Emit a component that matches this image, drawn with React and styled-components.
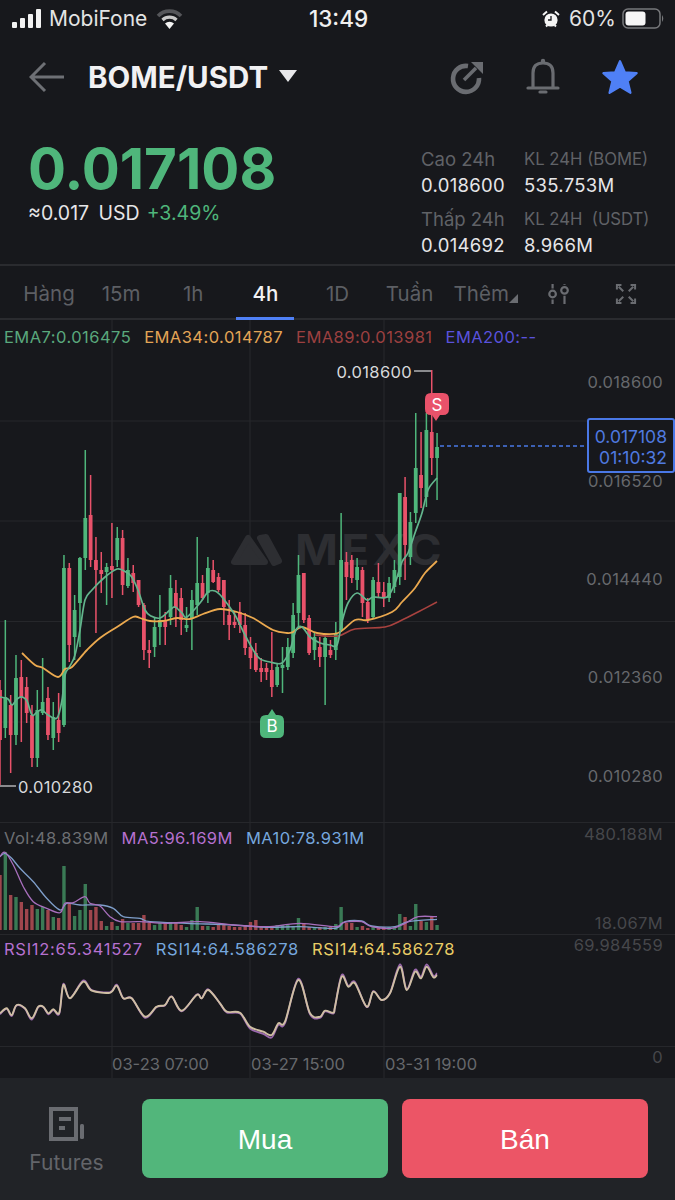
import React from "react";
import styled, { createGlobalStyle } from "styled-components";

const GREEN = "#4fb67b";
const RED = "#e9526a";

// [high, bodyTop, bodyBottom, low, colour] in screen y, one candle every 5.33px
const CANDLES = [
    [680, 690, 740, 785, "r"], [620, 697, 728, 738, "g"], [695, 705, 735, 773, "r"], [655, 678, 735, 745, "g"],
    [660, 677, 698, 742, "r"], [677, 687, 713, 723, "r"], [705, 715, 758, 767, "r"], [690, 710, 758, 767, "g"],
    [658, 702, 713, 715, "g"], [687, 698, 735, 740, "r"], [702, 717, 738, 750, "g"], [693, 720, 733, 742, "r"],
    [555, 568, 725, 727, "g"], [563, 568, 645, 662, "r"], [595, 610, 637, 660, "g"], [557, 558, 603, 647, "g"],
    [450, 518, 558, 570, "g"], [475, 515, 560, 567, "r"], [537, 560, 570, 633, "r"], [552, 570, 574, 593, "r"],
    [563, 567, 572, 605, "g"], [523, 566, 570, 598, "r"], [527, 538, 560, 567, "g"], [530, 538, 585, 595, "r"],
    [558, 570, 586, 588, "g"], [565, 573, 583, 592, "r"], [580, 580, 605, 607, "r"], [603, 605, 650, 660, "r"],
    [640, 650, 653, 668, "r"], [618, 627, 647, 657, "g"], [595, 620, 627, 645, "g"], [612, 620, 627, 645, "r"],
    [575, 588, 617, 625, "g"], [580, 593, 608, 627, "r"], [588, 598, 620, 635, "r"], [607, 625, 628, 632, "g"],
    [590, 600, 618, 650, "g"], [537, 583, 605, 615, "g"], [575, 583, 598, 600, "r"], [557, 568, 593, 603, "g"],
    [560, 570, 582, 583, "r"], [573, 577, 590, 592, "r"], [580, 580, 607, 625, "r"], [600, 615, 625, 640, "r"],
    [612, 622, 625, 628, "r"], [602, 612, 625, 633, "r"], [613, 625, 648, 655, "r"], [637, 647, 658, 669, "r"],
    [643, 653, 670, 672, "r"], [658, 668, 672, 682, "r"], [663, 668, 672, 680, "r"], [632, 670, 687, 697, "r"],
    [663, 667, 685, 687, "g"], [647, 665, 668, 693, "g"], [638, 647, 667, 670, "g"], [603, 615, 653, 658, "g"],
    [555, 575, 613, 627, "g"], [573, 573, 620, 623, "r"], [615, 618, 653, 655, "r"], [632, 637, 650, 660, "g"],
    [637, 647, 657, 667, "r"], [635, 638, 657, 705, "g"], [640, 650, 655, 658, "r"], [622, 633, 650, 660, "g"],
    [513, 560, 630, 632, "g"], [552, 562, 577, 600, "r"], [555, 560, 578, 583, "r"], [558, 567, 580, 590, "g"],
    [567, 570, 603, 617, "r"], [598, 602, 620, 623, "r"], [577, 580, 617, 618, "g"], [563, 582, 593, 597, "r"],
    [582, 592, 598, 607, "r"], [577, 583, 598, 602, "g"], [560, 570, 587, 593, "g"], [493, 493, 577, 585, "g"],
    [477, 497, 545, 580, "r"], [512, 522, 557, 565, "g"], [413, 468, 513, 523, "g"], [432, 475, 488, 508, "r"],
    [413, 430, 497, 507, "g"], [370, 432, 458, 475, "r"], [433, 447, 458, 500, "g"],
];

// volume bar tops in screen y, baseline 930
const VOLUME = [
    875, 852, 895, 897, 902, 909, 905, 909, 907, 910, 917, 918, 866, 903, 916, 910, 884, 910, 907, 921, 926,
    922, 926, 919, 923, 923, 923, 915, 923, 925, 923, 923, 922, 922, 925, 927, 920, 907, 926, 926, 927, 925,
    925, 926, 927, 927, 925, 922, 920, 927, 927, 927, 925, 925, 925, 926, 918, 923, 927, 927, 927, 927, 927,
    924, 907, 923, 923, 927, 926, 928, 927, 927, 927, 927, 927, 914, 917, 926, 904, 921, 922, 916, 925,
];

const EMA7 = [[0, 697], [8, 699], [12, 705], [17, 699], [22, 697], [27, 701], [32, 715], [37, 712], [42, 710], [48, 715], [57, 718], [62, 700], [65, 675], [70, 666], [75, 655], [80, 630], [85, 600], [92, 590], [105, 577], [117, 569], [124, 571], [131, 576], [138, 590], [145, 610], [151, 616], [160, 618], [170, 610], [175, 607], [182, 613], [187, 617], [200, 603], [208, 592], [215, 591], [222, 597], [235, 615], [245, 635], [258, 657], [270, 662], [282, 663], [290, 650], [296, 630], [302, 627], [310, 637], [320, 643], [330, 645], [337, 645], [342, 622], [348, 603], [357, 593], [367, 600], [373, 597], [387, 597], [395, 583], [402, 562], [408, 553], [415, 533], [422, 513], [428, 490], [437, 478]];
const EMA34 = [[22, 653], [35, 665], [43, 668], [58, 677], [65, 669], [72, 667], [87, 650], [100, 638], [117, 627], [133, 617], [140, 618], [150, 621], [163, 621], [177, 618], [190, 619], [203, 614], [220, 609], [237, 612], [253, 618], [273, 630], [287, 633], [293, 632], [302, 627], [317, 633], [338, 633], [355, 620], [368, 620], [392, 612], [402, 602], [415, 588], [425, 573], [437, 561]];
const EMA89 = [[315, 635], [338, 636], [355, 629], [385, 627], [402, 620], [418, 612], [437, 602]];

const z6 = (pts) => pts.map(([x, y]) => [x / 3, 820 + y / 3]);
const z7 = (pts) => pts.map(([x, y]) => [335 + x / 3, 820 + y / 3]);

const MA10 = [...z6([[0, 110], [15, 100], [35, 115], [60, 145], [100, 185], [140, 235], [180, 270], [200, 250], [240, 255], [300, 255], [340, 265], [370, 290], [420, 295], [450, 305], [560, 310], [700, 315], [800, 322], [900, 320]]), ...z7([[0, 325], [30, 305], [80, 303], [110, 318], [180, 320], [220, 305], [306, 298]])];
const MA5 = [...z6([[0, 110], [15, 97], [40, 135], [70, 200], [100, 245], [140, 265], [180, 278], [195, 250], [220, 248], [255, 230], [270, 250], [300, 258], [330, 290], [360, 305], [420, 305], [500, 310], [600, 305], [700, 315], [800, 320], [900, 310]]), ...z7([[0, 320], [20, 310], [40, 305], [80, 305], [110, 320], [170, 325], [210, 310], [250, 290], [306, 290]])];

const RSI = [...z6([[0, 580], [20, 565], [35, 585], [50, 555], [75, 565], [95, 595], [115, 560], [130, 560], [145, 580], [160, 568], [178, 578], [190, 495], [210, 535], [250, 485], [275, 512], [330, 518], [350, 497], [370, 535], [395, 535], [435, 590], [470, 560], [495, 555], [515, 530], [545, 572], [590, 525], [605, 535], [625, 510], [660, 550], [680, 575], [720, 578], [750, 620], [790, 635], [815, 645], [835, 610], [855, 605], [895, 480], [930, 580], [960, 590], [975, 572], [1000, 578]]), ...z7([[0, 560], [20, 470], [40, 500], [60, 490], [95, 560], [115, 515], [140, 540], [165, 520], [195, 440], [215, 510], [240, 455], [258, 475], [275, 440], [295, 472], [306, 465]])];

const smooth = (pts) => {
    let d = `M${pts[0][0]} ${pts[0][1]}`;
    for (let i = 0; i < pts.length - 1; i++) {
        const p0 = pts[i - 1] || pts[i];
        const p1 = pts[i];
        const p2 = pts[i + 1];
        const p3 = pts[i + 2] || p2;
        const c1x = p1[0] + (p2[0] - p0[0]) / 6;
        const c1y = p1[1] + (p2[1] - p0[1]) / 6;
        const c2x = p2[0] - (p3[0] - p1[0]) / 6;
        const c2y = p2[1] - (p3[1] - p1[1]) / 6;
        d += `C${c1x.toFixed(1)} ${c1y.toFixed(1)} ${c2x.toFixed(1)} ${c2y.toFixed(1)} ${p2[0].toFixed(1)} ${p2[1].toFixed(1)}`;
    }
    return d;
};

const candleX = (i) => i * 5.33;

function Grid({ top, bottom, rows = [] }) {
    return (
        <g stroke="#26272b" strokeWidth="1.2">
            {[112, 250, 384].map((x) => (
                <line key={x} x1={x} x2={x} y1={top} y2={bottom} />
            ))}
            {rows.map((y) => (
                <line key={y} x1="0" x2="675" y1={y} y2={y} />
            ))}
        </g>
    );
}

function MainChart() {
    return (
        <PanelSvg width="675" height="502" viewBox="0 320 675 502">
            <Grid top={320} bottom={822} rows={[421, 521, 621.5, 722]} />
            <g fill="#2d2e32">
                <path d="M248 538 L234 562 L265 562 Z" stroke="#2d2e32" strokeWidth="6" strokeLinejoin="round" />
                <path d="M260 538 L266 537 L279 561 L274 563 Z" stroke="#2d2e32" strokeWidth="6" strokeLinejoin="round" />
                <Watermark x="295" y="565" textLength="150" lengthAdjust="spacingAndGlyphs">MEXC</Watermark>
            </g>
            {CANDLES.map(([high, top, bottom, low, c], i) => {
                const x = candleX(i);
                const color = c === "g" ? GREEN : RED;
                return (
                    <g key={i} fill={color}>
                        <rect x={x - 0.75} y={high} width="1.5" height={low - high} />
                        <rect x={x - 1.9} y={top} width="3.8" height={Math.max(bottom - top, 2)} />
                    </g>
                );
            })}
            <path d={smooth(EMA89)} fill="none" stroke="#a8423f" strokeWidth="1.6" />
            <path d={smooth(EMA34)} fill="none" stroke="#eba94f" strokeWidth="1.8" />
            <path d={smooth(EMA7)} fill="none" stroke="#63b58d" strokeWidth="1.7" />

            <line x1="440" x2="587" y1="446" y2="446" stroke="#4a78e6" strokeWidth="1.5" strokeDasharray="4 3" />

            <AxisLabel x="412" y="378" anchor="end" fill="#d8d9db">0.018600</AxisLabel>
            <line x1="414" x2="431" y1="371" y2="371" stroke="#d8d9db" strokeWidth="1.2" />
            <AxisLabel x="18" y="793" fill="#d8d9db">0.010280</AxisLabel>
            <line x1="0" x2="16" y1="786" y2="786" stroke="#d8d9db" strokeWidth="1.2" />

            <path d="M431 393 H443 Q449 393 449 399 V409 Q449 415 443 415 H440 L436 421 L432 415 H431 Q425 415 425 409 V399 Q425 393 431 393 Z" fill={RED} />
            <BadgeText x="437" y="411">S</BadgeText>
            <path d="M266 715 H268 L272 709 L276 715 H278 Q284 715 284 721 V732 Q284 738 278 738 H266 Q260 738 260 732 V721 Q260 715 266 715 Z" fill={GREEN} />
            <BadgeText x="272" y="732">B</BadgeText>

            {[["0.018600", 388], ["0.016520", 487], ["0.014440", 585], ["0.012360", 683], ["0.010280", 782]].map(([t, y]) => (
                <AxisLabel key={t} x="663" y={y} anchor="end" fill="#66686c">{t}</AxisLabel>
            ))}
        </PanelSvg>
    );
}

function VolumeChart() {
    return (
        <PanelSvg width="675" height="112" viewBox="0 822 675 112">
            <Grid top={822} bottom={934} rows={[822.5]} />
            {VOLUME.map((top, i) => (
                <rect key={i} x={candleX(i) - 1.7} y={top} width="3.4" height={930 - top} fill={CANDLES[i][4] === "g" ? "#3a7a55" : "#9e464d"} />
            ))}
            <path d={smooth(MA10)} fill="none" stroke="#7f9fcb" strokeWidth="1.3" />
            <path d={smooth(MA5)} fill="none" stroke="#a86fbd" strokeWidth="1.3" />
            <AxisLabel x="663" y="840" anchor="end" fill="#46474b">480.188M</AxisLabel>
            <AxisLabel x="663" y="929" anchor="end" fill="#46474b">18.067M</AxisLabel>
        </PanelSvg>
    );
}

function RsiChart() {
    return (
        <PanelSvg width="675" height="112" viewBox="0 934 675 112">
            <Grid top={934} bottom={1046} rows={[934.5]} />
            <path d={smooth(RSI.map(([x, y]) => [x, y + (y - 1000) * 0.07]))} fill="none" stroke="#9a68ad" strokeWidth="1.8" />
            <path d={smooth(RSI)} fill="none" stroke="#cfbfa3" strokeWidth="1.9" />
            <AxisLabel x="663" y="951" anchor="end" fill="#46474b">69.984559</AxisLabel>
        </PanelSvg>
    );
}

function TimeAxis() {
    return (
        <PanelSvg width="675" height="32" viewBox="0 1046 675 32">
            <Grid top={1046} bottom={1078} rows={[1046.5]} />
            <TimeLabel x="112" y="1070">03-23 07:00</TimeLabel>
            <TimeLabel x="251" y="1070">03-27 15:00</TimeLabel>
            <TimeLabel x="385" y="1070">03-31 19:00</TimeLabel>
            <AxisLabel x="663" y="1063" anchor="end" fill="#46474b">0</AxisLabel>
        </PanelSvg>
    );
}

const TABS = ["Hàng", "15m", "1h", "4h", "1D", "Tuần"];

export default function App() {
    return (
        <Page>
            <GlobalStyle />
            <StatusBar>
                <StatusLeft>
                    <svg width="30" height="19" viewBox="0 0 30 19" fill="#f2f2f2">
                        <rect x="0" y="13" width="5" height="6" rx="1" />
                        <rect x="8" y="9" width="5" height="10" rx="1" />
                        <rect x="16" y="5" width="5" height="14" rx="1" />
                        <rect x="24" y="0" width="5" height="19" rx="1" />
                    </svg>
                    <Carrier>MobiFone</Carrier>
                    <svg width="27" height="20" viewBox="0 0 27 20" fill="none" strokeLinecap="butt">
                        <path d="M2 7 A16 16 0 0 1 25 7" stroke="#55565a" strokeWidth="3.6" />
                        <path d="M6.5 11 A10 10 0 0 1 20.5 11" stroke="#c8c8c8" strokeWidth="3.2" />
                        <path d="M13.5 20 L9 14.5 A6.5 6.5 0 0 1 18 14.5 Z" fill="#f4f4f4" />
                    </svg>
                </StatusLeft>
                <Clock>13:49</Clock>
                <StatusRight>
                    <svg width="18" height="18" viewBox="0 0 18 18">
                        <circle cx="9" cy="10" r="6.6" fill="#f4f4f4" />
                        <path d="M9 6 V10 H6" stroke="#17181c" strokeWidth="1.3" fill="none" />
                        <path d="M1 5 L5 1.5 M17 5 L13 1.5 M4 16.5 L5.5 15 M14 16.5 L12.5 15" stroke="#f4f4f4" strokeWidth="2" />
                    </svg>
                    <Carrier>60%</Carrier>
                    <svg width="43" height="21" viewBox="0 0 43 21">
                        <rect x="1" y="1" width="37" height="19" rx="5" fill="none" stroke="#77787b" strokeWidth="1.5" />
                        <rect x="3.5" y="3.5" width="20" height="14" rx="3" fill="#f6f6f6" />
                        <path d="M40 7 Q42.5 10.5 40 14 Z" fill="#77787b" />
                    </svg>
                </StatusRight>
            </StatusBar>

            <NavBar>
                <svg width="36" height="32" viewBox="0 0 36 32" fill="none" stroke="#6e7075" strokeWidth="3">
                    <path d="M35 16 H2 M16 2 L2 16 L16 30" />
                </svg>
                <PairName>BOME/USDT</PairName>
                <Caret />
                <NavIcons>
                    <svg width="36" height="36" viewBox="0 0 36 36" fill="none">
                        <path d="M19 7 A13 13 0 1 0 30 19" stroke="#6a6c71" strokeWidth="4.6" />
                        <path d="M15 21 L27 9" stroke="#6a6c71" strokeWidth="3.6" />
                        <path d="M22 3 H34 V15 Z" fill="#6a6c71" />
                    </svg>
                    <svg width="34" height="38" viewBox="0 0 34 38" fill="none" stroke="#6a6c71" strokeWidth="3.2">
                        <path d="M7 29 V15 Q7 5 17 5 Q27 5 27 15 V29" />
                        <path d="M2 30 H32" strokeLinecap="round" />
                        <circle cx="17" cy="3" r="1.2" fill="#6a6c71" strokeWidth="2" />
                        <path d="M14 34 H20" strokeLinecap="round" />
                    </svg>
                    <svg width="38" height="38" viewBox="0 0 24 24" fill="#4f80f6" stroke="#4f80f6" strokeWidth="1.4" strokeLinejoin="round">
                        <path d="M12 2 L15 9 L22.5 9.6 L16.8 14.6 L18.6 22 L12 18 L5.4 22 L7.2 14.6 L1.5 9.6 L9 9 Z" />
                    </svg>
                </NavIcons>
            </NavBar>

            <Summary>
                <PriceBlock>
                    <LastPrice>0.017108</LastPrice>
                    <PriceSub>
                        <span>≈0.017 USD</span>
                        <Change>+3.49%</Change>
                    </PriceSub>
                </PriceBlock>
                <Stats>
                    <StatLabel>Cao 24h</StatLabel>
                    <StatCaption>KL 24H (BOME)</StatCaption>
                    <StatValue>0.018600</StatValue>
                    <StatValue>535.753M</StatValue>
                    <StatLabel>Thấp 24h</StatLabel>
                    <StatCaption>KL 24H&nbsp; (USDT)</StatCaption>
                    <StatValue>0.014692</StatValue>
                    <StatValue>8.966M</StatValue>
                </Stats>
            </Summary>

            <Tabs>
                {TABS.map((t) => (
                    <Tab key={t} $active={t === "4h"}>{t}</Tab>
                ))}
                <Tab>
                    Thêm
                    <MoreCorner />
                </Tab>
                <Tab>
                    <SlidersIcon width="24" height="22" viewBox="0 0 26 24" fill="none" stroke="#6a6c71" strokeWidth="2.4">
                        <path d="M6 1 V6 M6 18 V23 M19 1 V2 M19 14 V23" />
                        <circle cx="6" cy="12" r="3.6" />
                        <circle cx="19" cy="8" r="3.6" />
                    </SlidersIcon>
                </Tab>
                <Tab>
                    <svg width="22" height="20" viewBox="0 0 22 22" fill="none" stroke="#6a6c71" strokeWidth="2.2">
                        <path d="M3 3 L8 8 M19 3 L14 8 M3 19 L8 14 M19 19 L14 14" />
                        <path d="M1 6 V1 H6 M16 1 H21 V6 M1 16 V21 H6 M16 21 H21 V16" />
                    </svg>
                </Tab>
            </Tabs>

            <Panel>
                <MainChart />
                <Legend $top={7}>
                    <LegendItem $color="#5aa87d">EMA7:0.016475</LegendItem>
                    <LegendItem $color="#e3a556">EMA34:0.014787</LegendItem>
                    <LegendItem $color="#9c4040">EMA89:0.013981</LegendItem>
                    <LegendItem $color="#5a52dc">EMA200:--</LegendItem>
                </Legend>
                <PriceTag>
                    0.017108
                    <br />
                    01:10:32
                </PriceTag>
            </Panel>
            <Panel>
                <VolumeChart />
                <Legend $top={6}>
                    <LegendItem $color="#6d6f73">Vol:48.839M</LegendItem>
                    <LegendItem $color="#b671d0">MA5:96.169M</LegendItem>
                    <LegendItem $color="#76a7de">MA10:78.931M</LegendItem>
                </Legend>
            </Panel>
            <Panel>
                <RsiChart />
                <Legend $top={5} $tracking={0.72}>
                    <LegendItem $color="#b671d0">RSI12:65.341527</LegendItem>
                    <LegendItem $color="#76a7de">RSI14:64.586278</LegendItem>
                    <LegendItem $color="#e9cd66">RSI14:64.586278</LegendItem>
                </Legend>
            </Panel>
            <Panel>
                <TimeAxis />
            </Panel>

            <BottomBar>
                <FuturesLink>
                    <svg width="36" height="34" viewBox="0 0 36 34" fill="none">
                        <path d="M2 2 H27 V32 H2 Z" stroke="#6a6c71" strokeWidth="4" />
                        <rect x="10" y="10" width="12" height="4" fill="#6a6c71" />
                        <rect x="10" y="19" width="6" height="4" fill="#6a6c71" />
                        <rect x="31" y="17" width="4" height="15" rx="1.5" fill="#6a6c71" />
                    </svg>
                    <span>Futures</span>
                </FuturesLink>
                <TradeButton $color="#52b67b">Mua</TradeButton>
                <TradeButton $color="#ec5566">Bán</TradeButton>
            </BottomBar>
        </Page>
    );
}

const GlobalStyle = createGlobalStyle`
    html, body {
        margin: 0;
        padding: 0;
        background: #17181c;
    }
    * {
        box-sizing: border-box;
    }
`;

const Page = styled.div`
    width: 675px;
    height: 1200px;
    overflow: hidden;
    background: #17181c;
    font-family: Inter, "Liberation Sans", sans-serif;
    color: #e8e8ea;
`;
const StatusBar = styled.div`
    height: 37px;
    display: grid;
    grid-template-columns: 1fr auto 1fr;
    align-items: center;
    padding: 0 10px 0 12px;
`;
const StatusLeft = styled.div`
    display: flex;
    align-items: center;
    gap: 7px;
    svg:last-child {
        margin-left: 2px;
    }
`;
const StatusRight = styled.div`
    display: flex;
    align-items: center;
    justify-content: flex-end;
    gap: 6px;
    svg:first-child {
        margin-right: 3px;
    }
`;
const Carrier = styled.span`
    font-size: 21px;
    color: #e4e4e4;
`;
const Clock = styled.span`
    font-size: 22.5px;
    font-weight: 500;
    color: #f0f0f0;
`;
const NavBar = styled.div`
    height: 79px;
    display: flex;
    align-items: center;
    padding: 0 36px 0 29px;
`;
const PairName = styled.div`
    margin-left: 23px;
    font-size: 29.5px;
    font-weight: 700;
    color: #f1f1f3;
`;
const Caret = styled.div`
    margin-left: 11px;
    margin-bottom: 2px;
    width: 0;
    height: 0;
    border-left: 9px solid transparent;
    border-right: 9px solid transparent;
    border-top: 12px solid #e8e8ea;
`;
const NavIcons = styled.div`
    margin-left: auto;
    display: flex;
    align-items: center;
    gap: 41px;
`;
const Summary = styled.div`
    height: 150px;
    display: flex;
    justify-content: space-between;
    padding: 0 0 0 28px;
    border-bottom: 2px solid #2a2b2f;
`;
const PriceBlock = styled.div`
    padding-top: 23px;
`;
const LastPrice = styled.div`
    font-size: 56.5px;
    line-height: 60px;
    font-weight: 700;
    color: ${GREEN};
`;
const PriceSub = styled.div`
    margin-top: 2px;
    display: flex;
    gap: 7px;
    font-size: 19.5px;
    line-height: 24px;
    word-spacing: 4px;
    color: #e6e6e8;
`;
const Change = styled.span`
    color: ${GREEN};
`;
const Stats = styled.div`
    width: 254px;
    padding-top: 30px;
    display: grid;
    grid-template-columns: 103px 1fr;
    grid-template-rows: 26px 26px 34px 26px;
    align-items: end;
`;
const StatLabel = styled.div`
    font-size: 18.5px;
    line-height: 26px;
    color: #606267;
`;
const StatCaption = styled.div`
    font-size: 16.7px;
    line-height: 26px;
    color: #606267;
`;
const StatValue = styled.div`
    font-size: 18.5px;
    line-height: 26px;
    letter-spacing: 0.3px;
    color: #e6e6e8;
`;
const Tabs = styled.div`
    height: 54px;
    display: flex;
    padding: 3px 13px 0;
    border-bottom: 2px solid #2a2b2f;
`;
const Tab = styled.div`
    position: relative;
    flex: 1;
    display: flex;
    align-items: center;
    justify-content: center;
    font-size: 20.5px;
    color: ${(p) => (p.$active ? "#f2f2f4" : "#5d5f64")};
    font-weight: ${(p) => (p.$active ? 500 : 400)};
    &::after {
        content: "";
        display: ${(p) => (p.$active ? "block" : "none")};
        position: absolute;
        left: 7px;
        right: 7px;
        bottom: -2px;
        height: 3px;
        background: #4f80f6;
    }
`;
const MoreCorner = styled.span`
    width: 0;
    height: 0;
    margin: 10px -8px 0 0;
    border-left: 9px solid transparent;
    border-bottom: 9px solid #6a6c71;
`;
const SlidersIcon = styled.svg`
    margin-left: 10px;
`;
const Panel = styled.div`
    position: relative;
`;
const PanelSvg = styled.svg`
    display: block;
`;
const Legend = styled.div`
    position: absolute;
    top: ${(p) => p.$top}px;
    left: 4px;
    display: flex;
    gap: 13px;
    font-size: 16.5px;
    letter-spacing: ${(p) => p.$tracking || 0.45}px;
    line-height: 20px;
    white-space: nowrap;
`;
const LegendItem = styled.span`
    color: ${(p) => p.$color};
`;
const PriceTag = styled.div`
    position: absolute;
    top: 98px;
    right: 0;
    width: 88px;
    height: 55px;
    padding: 6px 6px 0 0;
    border: 2px solid #4a78e6;
    border-radius: 3px;
    background: #17181c;
    color: #4f7ae0;
    font-size: 17.5px;
    line-height: 21px;
    text-align: right;
`;
const ChartText = styled.text`
    font-family: Inter, "Liberation Sans", sans-serif;
    font-size: 16.5px;
    letter-spacing: 0.35px;
`;
const AxisLabel = ({ anchor = "start", children, ...rest }) => (
    <ChartText textAnchor={anchor} {...rest}>{children}</ChartText>
);
const TimeLabel = styled.text`
    font-family: Inter, "Liberation Sans", sans-serif;
    font-size: 16.5px;
    fill: #66686c;
`;
const BadgeText = styled.text`
    font-family: Inter, "Liberation Sans", sans-serif;
    font-size: 17px;
    fill: #ffffff;
    text-anchor: middle;
`;
const Watermark = styled.text`
    font-family: Inter, "Liberation Sans", sans-serif;
    font-size: 42px;
    font-weight: 700;
    letter-spacing: 3px;
`;
const BottomBar = styled.div`
    height: 122px;
    display: flex;
    align-items: flex-start;
    padding: 21px 27px 0 0;
    gap: 14px;
    background: #212327;
`;
const FuturesLink = styled.div`
    width: 128px;
    padding: 8px 0 0 5px;
    display: flex;
    flex-direction: column;
    align-items: center;
    gap: 9px;
    font-size: 21px;
    color: #63656a;
`;
const TradeButton = styled.div`
    flex: 1;
    height: 79px;
    padding-top: 2px;
    display: flex;
    align-items: center;
    justify-content: center;
    border-radius: 8px;
    background: ${(p) => p.$color};
    color: #ffffff;
    font-family: "Liberation Sans", sans-serif;
    font-size: 28px;
`;
